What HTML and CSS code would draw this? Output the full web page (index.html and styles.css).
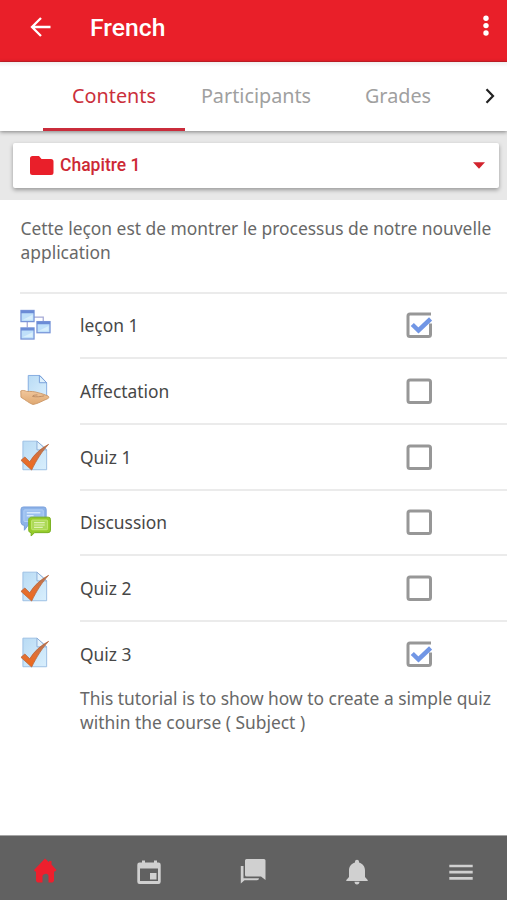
FILE: index.html
```html
<!DOCTYPE html>
<html lang="fr">
<head>
<meta charset="utf-8">
<title>French</title>
<link rel="stylesheet" href="styles.css">
</head>
<body>
<svg class="defs" width="0" height="0" aria-hidden="true">
  <defs>
    <linearGradient id="paper" x1="0" y1="0" x2="1" y2="1"><stop offset="0" stop-color="#b9dbf4"/><stop offset="1" stop-color="#d9effd"/></linearGradient>
    <linearGradient id="tick" x1="0" y1="0" x2="0" y2="1"><stop offset="0" stop-color="#a8765c"/><stop offset=".5" stop-color="#e07036"/><stop offset="1" stop-color="#ef6818"/></linearGradient>
    <linearGradient id="skin" x1="0" y1="0" x2="0" y2="1"><stop offset="0" stop-color="#f1c79c"/><stop offset="1" stop-color="#dfa871"/></linearGradient>
    <symbol id="quiz" viewBox="0 0 32 32">
      <path d="M3 1.200h14.500l10 9v20.500H3z" fill="url(#paper)" stroke="#9cbfe3"/>
      <path d="M17.500 1.200v9h10z" fill="#e3f2fc" stroke="#8badd8"/>
      <path d="M1 21l4-3.500 5 5C15 14.500 21 9 29.500 4.500 22.500 12 17.500 20 12 31z" fill="url(#tick)" stroke="#b86337" stroke-width=".8"/>
    </symbol>
    <symbol id="box" viewBox="0 0 26 26">
      <rect x="2" y="2" width="22.500" height="22.500" rx="2" fill="#fff" stroke="#979797" stroke-width="3"/>
    </symbol>
    <symbol id="boxed" viewBox="0 0 26 26">
      <path d="M25 2H4a2 2 0 0 0-2 2v18.500a2 2 0 0 0 2 2h18.500a2 2 0 0 0 2-2V11.500" fill="#fff" stroke="#979797" stroke-width="3"/>
      <path d="M6.300 12.500l6.200 6L24.600 7" fill="none" stroke="#7196e5" stroke-width="4.500"/>
    </symbol>
  </defs>
</svg>
<div class="app">
  <header class="topbar">
    <svg class="back" viewBox="0 0 20 20"><path d="M20 10H2M10.500 1L1.500 10l9 9" fill="none" stroke="#fff" stroke-width="2.300"/></svg>
    <h1 class="title">French</h1>
    <svg class="more" viewBox="0 0 6 22"><circle cx="3" cy="3.200" r="2.700"/><circle cx="3" cy="10.600" r="2.700"/><circle cx="3" cy="18" r="2.700"/></svg>
  </header>
  <nav class="tabs">
    <a class="tab tab-active">Contents</a>
    <a class="tab">Participants</a>
    <a class="tab">Grades</a>
    <svg class="next" viewBox="0 0 10 16"><path d="M1.500 1.300L8 8l-6.500 6.700" fill="none" stroke="#222" stroke-width="2.200"/></svg>
  </nav>
  <section class="picker">
    <div class="select">
      <svg class="folder" viewBox="0 0 24 20"><path d="M2.500 0H9l2.500 3H21a2.500 2.500 0 0 1 2.500 2.500v11A2.500 2.500 0 0 1 21 19H2.500A2.500 2.500 0 0 1 0 16.500v-14A2.500 2.500 0 0 1 2.500 0z" fill="#e91f2a"/></svg>
      <span class="chapter">Chapitre 1</span>
      <svg class="caret" viewBox="0 0 12 7"><path d="M0 .3h12L6 6.800z" fill="#d2232d"/></svg>
    </div>
  </section>
  <main class="content">
    <p class="intro">Cette leçon est de montrer le processus de notre nouvelle<br>application</p>
    <ul class="list">
      <li class="item">
        <svg class="icon" viewBox="0 0 32 32">
          <path d="M14 8.500h10v5M7.500 13v6" fill="none" stroke="#a5a9d6" stroke-width="1.300"/>
          <g fill="#bfe0fa" stroke="#7895d8" stroke-width="1.300"><rect x="1" y="1.500" width="13.500" height="11.500"/><rect x="1" y="19.500" width="13.500" height="11.500"/><rect x="17.500" y="13" width="13.500" height="11.500"/></g>
          <path d="M1 3h13.500M1 21h13.500M17.500 14.500H31" stroke="#6b8cd6" stroke-width="2.600"/>
          <path d="M3 11l10-5v5zM3 29l10-5v5zM19.500 22.500l10-5v5z" fill="#d9effc"/>
        </svg>
        <div class="row"><span>leçon 1</span><svg class="check"><use href="#boxed"/></svg></div>
      </li>
      <li class="item">
        <svg class="icon" viewBox="0 0 32 32">
          <path d="M8.500 1.500h12l7 7.500v15h-19z" fill="url(#paper)" stroke="#84ace0"/>
          <path d="M20 1.500V9h7.500z" fill="#dff1fd" stroke="#789fd9"/>
          <path d="M.8 17.500c2-1 4-.4 6.200.5 4 0 8 0 10.500 1 2 .7 5 1 7 2l4.500 1.700c1 .9 1 2.300-.5 2.800-5 2-9.500 5-15 6C10 30.500 6 27 1 24z" fill="url(#skin)" stroke="#ca9564" stroke-width=".9"/>
          <path d="M25 22.500c-4 1-8 1.400-12 .7 0-1.700 3-1.200 5-1.700" fill="none" stroke="#b88962" stroke-width=".9"/>
        </svg>
        <div class="row"><span>Affectation</span><svg class="check"><use href="#box"/></svg></div>
      </li>
      <li class="item">
        <svg class="icon"><use href="#quiz"/></svg>
        <div class="row"><span>Quiz 1</span><svg class="check"><use href="#box"/></svg></div>
      </li>
      <li class="item">
        <svg class="icon" viewBox="0 0 32 32">
          <path d="M3.500 1h21A2.500 2.500 0 0 1 27 3.500v13a2.500 2.500 0 0 1-2.500 2.500H9l-4.500 6V20A3.500 3.500 0 0 1 1 17V3.500A2.500 2.500 0 0 1 3.500 1z" fill="#8db3e8" stroke="#789fdc"/>
          <rect x="4" y="4" width="20" height="12" rx="1" fill="#9cc0f0" stroke="#b4d2f8"/>
          <path d="M7 7h14M7 10h7" stroke="#d5e8fd" stroke-width="1.500"/>
          <path d="M12 11.500h17a2.500 2.500 0 0 1 2.500 2.500v11a2.500 2.500 0 0 1-2.500 2.500H15L11.500 31v-3.500C10 27.500 9 26.500 9 25V14c0-1.500 1.500-2.500 3-2.500z" fill="#95cb2a" stroke="#78b020"/>
          <rect x="12" y="14.500" width="16.500" height="10" rx="1" fill="#acd957" stroke="#c5e777"/>
          <path d="M14.500 17.200h11M14.500 19.600h11M14.500 22h9" stroke="#e0f2b5" stroke-width="1.200"/>
        </svg>
        <div class="row"><span>Discussion</span><svg class="check"><use href="#box"/></svg></div>
      </li>
      <li class="item">
        <svg class="icon"><use href="#quiz"/></svg>
        <div class="row"><span>Quiz 2</span><svg class="check"><use href="#box"/></svg></div>
      </li>
      <li class="item">
        <svg class="icon"><use href="#quiz"/></svg>
        <div class="row"><span>Quiz 3</span><svg class="check"><use href="#boxed"/></svg></div>
      </li>
    </ul>
    <p class="note">This tutorial is to show how to create a simple quiz<br>within the course ( Subject )</p>
  </main>
  <footer class="bottombar">
    <a class="nav"><svg class="glyph" viewBox="0 0 26 26"><path d="M13 -.5l4 3.700V2h2.500v3.500l5 5.500-1.500 1.500h-1V22l-1.500 1.500h-4V17c0-1.300-1-2.300-2.500-2.300S10.500 15.700 10.500 17v6.500h-5L4 22v-9.500H3L2 11z" fill="#ee1f2d"/></svg></a>
    <a class="nav"><svg class="glyph" viewBox="0 0 26 26"><path d="M4 3.500h2V1.500h3v2h9v-2h3v2h1.500A2.200 2.200 0 0 1 24.700 5.700v17a2.200 2.200 0 0 1-2.200 2.200h-19a2.200 2.200 0 0 1-2.200-2.200v-17A2.200 2.200 0 0 1 3.500 3.500zM4 9.500V22h18V9.500z" fill="#d0d0d0" fill-rule="evenodd"/><rect x="14" y="14" width="6.500" height="6.500" fill="#d0d0d0"/></svg></a>
    <a class="nav"><svg class="glyph" viewBox="0 0 26 26"><path d="M6.500 0H24a1.500 1.500 0 0 1 1.500 1.500V21l-4.500-3.500H6.500A1.500 1.500 0 0 1 5 16V1.500A1.500 1.500 0 0 1 6.500 0zM.8 7h2.700v12.200h15.500a2 2 0 0 1-2 2H4.500L.8 24.500z" fill="#d0d0d0"/></svg></a>
    <a class="nav"><svg class="glyph" viewBox="0 0 26 26"><path d="M13 .8c1.200 0 2 .9 2 2v.8c3.800 1 6 4.200 6 8V18l2.700 3v1H2.300v-1L5 18v-6.400c0-3.800 2.200-7 6-8v-.8c0-1.100.8-2 2-2zM10.500 22.700h5c0 1.600-1 2.700-2.500 2.700s-2.500-1.100-2.500-2.700z" fill="#d0d0d0"/></svg></a>
    <a class="nav"><svg class="glyph" viewBox="0 0 26 26"><path d="M1.300 7h23.400M1.300 13.200h23.400M1.300 19.400h23.400" stroke="#d0d0d0" stroke-width="2.700"/></svg></a>
  </footer>
</div>
</body>
</html>
```
FILE: styles.css
```css
* { box-sizing: border-box; }
body { margin: 0; background: #fff; font-family: "Noto Sans", sans-serif; color: #474747; }
.defs { display: block; }
svg { flex: none; }
.app { width: 507px; height: 900px; display: flex; flex-direction: column; overflow: hidden; }

.topbar { height: 62px; flex: none; display: flex; align-items: center; padding: 0 18px 6px 30px; background: #e91f29; border-bottom: 1px solid #d02029; color: #fff; }
.back { width: 21px; height: 20px; margin-bottom: 1px; }
.title { margin: 0 auto 0 39px; font: 500 24.700px/30px Roboto, sans-serif; color: #fff; }
.more { width: 6px; height: 22px; margin-bottom: 4px; fill: #fff; }

.tabs { height: 69px; flex: none; display: flex; align-items: center; padding-left: 43px; position: relative; z-index: 1; background: linear-gradient(#efefef, #fff 5px); box-shadow: 0 1px 4px rgba(0,0,0,.45); }
.tab { height: 69px; width: 142px; font-size: 19.800px; line-height: 68px; text-align: center; color: #a0a0a0; white-space: nowrap; }
.tab-active { color: #cb2f3b; border-bottom: 3px solid #ca2c3b; }
.next { width: 10px; height: 16px; margin: 0 0 1px 16px; }

.picker { height: 69px; flex: none; padding: 12px 8px 12px 13px; background: #e8e8e8; }
.select { height: 45px; display: flex; align-items: center; padding: 0 14px 1px 16.500px; background: #fff; border-radius: 2px; box-shadow: 0 2px 4px rgba(0,0,0,.35); }
.folder { width: 24px; height: 20px; margin-top: 1px; }
.chapter { margin: 0 auto 0 6.500px; font: 500 17.500px/24px Roboto, sans-serif; color: #cd2935; }
.caret { width: 12px; height: 7px; }

.content { flex: 1; min-height: 0; padding-left: 20.500px; }
.intro, .note { margin: 0; font-size: 17.400px; line-height: 24px; color: #686868; white-space: nowrap; }
.intro { height: 91.700px; padding-top: 15.500px; }
.list { margin: 0 0 0 -.5px; padding: 0; list-style: none; border-top: 2px solid #ebebeb; }
.item { height: 65.700px; display: flex; }
.icon { width: 31px; height: 31px; margin: 15px 29px 0 0; }
.row { flex: 1; display: flex; align-items: center; padding-bottom: .4px; border-bottom: 2px solid #ebebeb; font-size: 17.400px; }
.row span { flex: 1; }
.item:last-child .row { border-bottom-color: transparent; }
.check { width: 26px; height: 26px; margin-right: 75px; }
.note { margin: -2px 0 0 59.500px; }

.bottombar { height: 65px; flex: none; display: flex; align-items: flex-start; justify-content: space-between; padding: 23px 33px 0 32px; background: #616161; border-top: 1px solid #a5a5a5; }
.nav, .glyph { display: block; width: 26px; height: 26px; overflow: visible; }
```
